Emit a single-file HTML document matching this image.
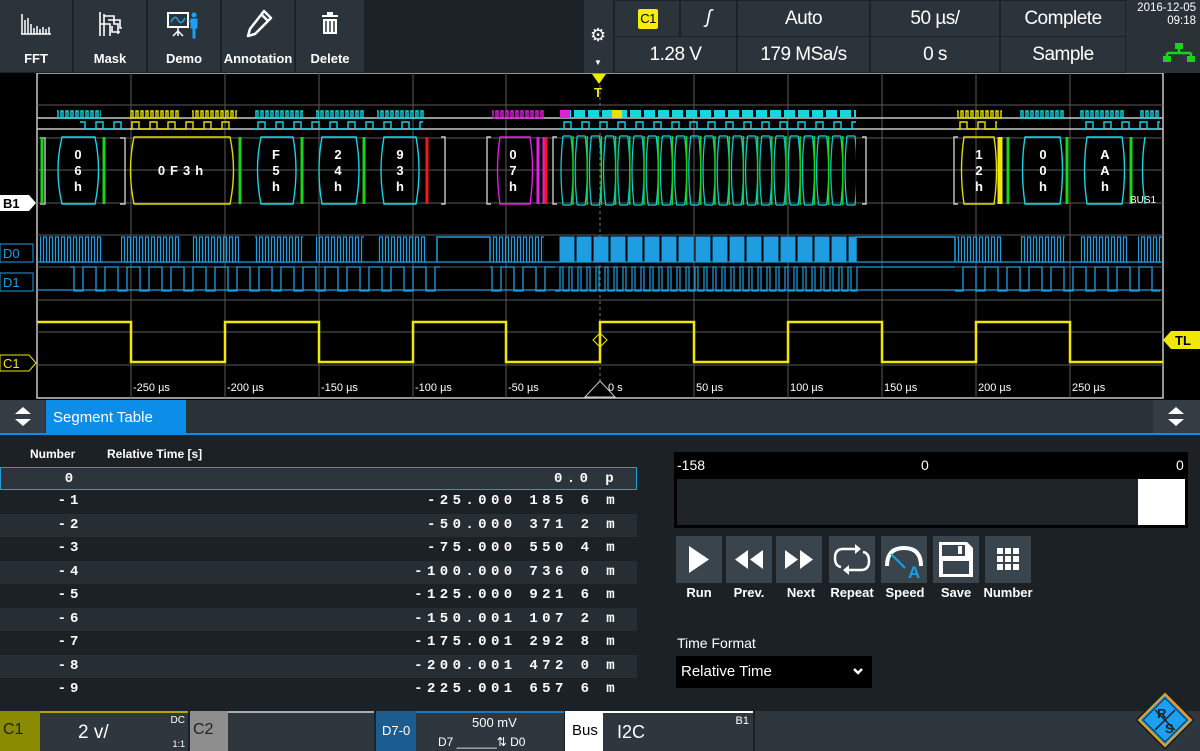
<!DOCTYPE html>
<html><head><meta charset="utf-8"><style>
*{margin:0;padding:0;box-sizing:border-box}
body{width:1200px;height:751px;background:#000;position:relative;overflow:hidden;font-family:"Liberation Sans",sans-serif;color:#fff}
.a{position:absolute}
.btn{position:absolute;top:0;height:72px;background:#2c343b;text-align:center;font-size:13px;font-weight:bold;transform-origin:0 0}
.btn span{position:absolute;left:0;right:0;top:51px}
.cell{position:absolute;background:#2c343b;text-align:center;font-size:19px;color:#fff;letter-spacing:-0.5px}
.row{position:absolute;left:0;width:637px;height:23.4px;font-family:"Liberation Mono",monospace;font-weight:bold;font-size:14px}
.row .n{position:absolute;left:50px;top:3px;width:40px;text-align:center;letter-spacing:4px}
.row .v{position:absolute;right:18px;top:3px;letter-spacing:4.4px;white-space:pre}
.pb{position:absolute;top:536px;width:46px;height:47px;background:#3a444c}
.pl{position:absolute;top:585px;width:56px;text-align:center;font-size:13px;font-weight:bold}
</style></head><body>
<!-- top toolbar -->
<div class="a" style="left:0;top:0;width:1200px;height:73px;background:#1c2226"></div>
<div class="btn" style="left:0;width:72px"><svg class="a" style="left:20px;top:12px" width="32" height="26"><path d="M2 2V22M5 8V22M8 6V22M11 12V22M14 16V22M17 14V22M20 17V22M23 15V22M26 17V22M29 15V22M1 22H31" stroke="#fff" stroke-width="1.5"/></svg><span>FFT</span></div>
<div class="btn" style="left:74px;width:72px"><svg class="a" style="left:22px;top:10px" width="28" height="28"><path d="M4 2V26M8 4V26M8 6H18V14H22V24M12 10H24V18H26M4 14H14V26M16 16V22H24" stroke="#fff" stroke-width="1.6" fill="none"/></svg><span>Mask</span></div>
<div class="btn" style="left:148px;width:72px"><svg class="a" style="left:18px;top:10px" width="36" height="30"><rect x="2" y="3" width="20" height="14" fill="none" stroke="#fff" stroke-width="2"/><path d="M5 12Q9 4 12 10T19 8" stroke="#1ea0f0" fill="none" stroke-width="1.5"/><path d="M12 17V26M7 26L12 21L17 26" stroke="#fff" stroke-width="1.5" fill="none"/><circle cx="28" cy="5" r="2.5" fill="#1ea0f0"/><path d="M25 9H31V18H29V28H27V18H25Z M22 11L26 12" fill="#1ea0f0" stroke="#1ea0f0"/></svg><span>Demo</span></div>
<div class="btn" style="left:222px;width:72px"><svg class="a" style="left:22px;top:8px" width="30" height="32"><path d="M20 3L27 10L11 26L4 28L6 21Z M17 6L24 13" stroke="#fff" stroke-width="2.5" fill="none" stroke-linejoin="round"/></svg><span>Annotation</span></div>
<div class="btn" style="left:296px;width:68px"><svg class="a" style="left:25px;top:12px" width="18" height="24"><rect x="1" y="3" width="16" height="2" fill="#fff"/><rect x="6" y="0" width="6" height="3" fill="#fff"/><path d="M2 7H16V22H2Z" fill="#fff"/><path d="M5 9V20M9 9V20M13 9V20" stroke="#2c343b" stroke-width="1.5"/></svg><span>Delete</span></div>
<div class="a" style="left:584px;top:0;width:29px;height:73px;background:#2c343b"></div>
<div class="a" style="left:590px;top:25px;font-size:18px;color:#fff">⚙</div>
<div class="a" style="left:594px;top:58px;font-size:8px;color:#fff">▼</div>
<div class="cell" style="left:615px;top:1px;width:64px;height:35px"><div class="a" style="left:23px;top:8px;width:20px;height:20px;background:#f4ee00;color:#000;font-size:13px;line-height:20px;border-radius:2px">C1</div></div>
<div class="cell" style="left:681px;top:1px;width:55px;height:35px;line-height:34px;font-style:italic">ʃ</div>
<div class="cell" style="left:738px;top:1px;width:131px;height:35px;line-height:35px">Auto</div>
<div class="cell" style="left:871px;top:1px;width:128px;height:35px;line-height:35px">50 µs/</div>
<div class="cell" style="left:1001px;top:1px;width:124px;height:35px;line-height:35px">Complete</div>
<div class="cell" style="left:615px;top:37px;width:121px;height:35px;line-height:35px">1.28 V</div>
<div class="cell" style="left:738px;top:37px;width:131px;height:35px;line-height:35px">179 MSa/s</div>
<div class="cell" style="left:871px;top:37px;width:128px;height:35px;line-height:35px">0 s</div>
<div class="cell" style="left:1001px;top:37px;width:124px;height:35px;line-height:35px">Sample</div>
<div class="a" style="left:1126px;top:0;width:74px;height:73px;background:#2a3238"></div>
<div class="a" style="left:1128px;top:2px;width:68px;text-align:right;font-size:11.5px;line-height:13px">2016-12-05<br>09:18</div>
<svg class="a" style="left:1162px;top:42px" width="34" height="22"><rect x="13" y="1" width="8" height="6" fill="#19d419"/><path d="M17 7V11M5 11H29M5 11V14M29 11V14" stroke="#19d419" stroke-width="2.5"/><rect x="1" y="14" width="8" height="6" fill="#19d419"/><rect x="25" y="14" width="8" height="6" fill="#19d419"/></svg>

<!-- scope plot -->
<svg class="a" style="left:0;top:73px" width="1200" height="327" viewBox="0 73 1200 327">
<defs>
<pattern id="pd0" patternUnits="userSpaceOnUse" x="0" y="236" width="6" height="28"><path d="M0 26H1.5V1H4.5V26H6" stroke="#1e9ee0" fill="none" stroke-width="1.2"/></pattern>
<pattern id="pd1" patternUnits="userSpaceOnUse" x="0" y="266" width="22" height="26"><path d="M0 1H8V25H17V1H22" stroke="#1e9ee0" fill="none" stroke-width="1.3"/></pattern>
<pattern id="pd1b" patternUnits="userSpaceOnUse" x="0" y="266" width="9" height="26"><path d="M0 25H2V1H5V25H9" stroke="#1e9ee0" fill="none" stroke-width="1.2"/></pattern>
<pattern id="pbc" patternUnits="userSpaceOnUse" x="0" y="110" width="5" height="9"><path d="M0 8H1V1H3V8H5" stroke="#17d6e0" fill="none" stroke-width="1.4"/></pattern>
<pattern id="pby" patternUnits="userSpaceOnUse" x="0" y="110" width="5" height="9"><path d="M0 8H1V1H3V8H5" stroke="#e8e000" fill="none" stroke-width="1.4"/></pattern>
<pattern id="pbm" patternUnits="userSpaceOnUse" x="0" y="110" width="5" height="9"><path d="M0 8H1V1H3V8H5" stroke="#e020e0" fill="none" stroke-width="1.4"/></pattern>
<pattern id="pb2" patternUnits="userSpaceOnUse" x="0" y="121" width="18" height="9"><path d="M0 8H6V1H13V8H18" stroke="#17d6e0" fill="none" stroke-width="1.4"/></pattern>
<pattern id="pb2y" patternUnits="userSpaceOnUse" x="0" y="121" width="18" height="9"><path d="M0 8H6V1H13V8H18" stroke="#e8e000" fill="none" stroke-width="1.4"/></pattern>
<pattern id="phx" patternUnits="userSpaceOnUse" x="560" y="135" width="14.2" height="72"><path d="M3 1Q-1 36 3 70M11 1Q15 36 11 70M3 1H11M3 70H11" stroke="#17d6e0" fill="none" stroke-width="1.2"/><path d="M13 1V70" stroke="#19d419" stroke-width="1.5"/></pattern>
<pattern id="pfill" patternUnits="userSpaceOnUse" x="559" y="236" width="17" height="28"><rect x="1" y="1" width="14" height="25" fill="#1e9ee0"/><path d="M0 26H1V1H15V26H17" stroke="#1e9ee0" fill="none"/></pattern>
</defs>
<rect x="37" y="73" width="1126" height="325" fill="#000" stroke="#c8c8c8" stroke-width="1.5"/>
<g stroke="#5a5a5a" stroke-width="1">
<path d="M131 73V398M225 73V398M319 73V398M413 73V398M506 73V398M694 73V398M788 73V398M882 73V398M976 73V398M1070 73V398"/>
<path d="M37 105H1163M37 138H1163M37 170H1163M37 203H1163M37 235H1163M37 267H1163M37 300H1163M37 332H1163M37 365H1163"/>
</g>
<path d="M600 73V398" stroke="#777" stroke-dasharray="3 3"/>
<!-- bus trace lines -->
<path d="M37 118H1163M37 129H1163" stroke="#c8c8c8" stroke-width="1.4"/>
<rect x="57" y="110" width="44" height="9" fill="url(#pbc)"/><rect x="130" y="110" width="50" height="9" fill="url(#pby)"/><rect x="192" y="110" width="45" height="9" fill="url(#pby)"/>
<rect x="255" y="110" width="48" height="9" fill="url(#pbc)"/><rect x="316" y="110" width="48" height="9" fill="url(#pbc)"/><rect x="377" y="110" width="48" height="9" fill="url(#pbc)"/><rect x="492" y="110" width="52" height="9" fill="url(#pbm)"/>
<rect x="957" y="110" width="45" height="9" fill="url(#pby)"/><rect x="1020" y="110" width="45" height="9" fill="url(#pbc)"/><rect x="1080" y="110" width="45" height="9" fill="url(#pbc)"/><rect x="1140" y="110" width="20" height="9" fill="url(#pbc)"/>
<path d="M560 114H856" stroke="#17d6e0" stroke-width="8" stroke-dasharray="11 3"/>
<rect x="560" y="110" width="10" height="8" fill="#e020e0"/><rect x="612" y="110" width="10" height="8" fill="#e8e000"/>
<rect x="80" y="121" width="45" height="9" fill="url(#pb2)"/><rect x="130" y="121" width="100" height="9" fill="url(#pb2y)"/><rect x="253" y="121" width="170" height="9" fill="url(#pb2)"/><rect x="560" y="121" width="296" height="9" fill="url(#pb2)"/><rect x="957" y="121" width="40" height="9" fill="url(#pb2y)"/><rect x="1080" y="121" width="80" height="9" fill="url(#pb2)"/>
<!-- hexes -->
<g fill="none" stroke-width="1.4">
<path d="M40 138H45V204H40M120 138H125V204H120" stroke="#c8c8c8"/>
<path d="M62 137H95Q102 170 95 204H62Q54 170 62 137Z" stroke="#17d6e0"/>
<path d="M134 137H230Q237 170 230 204H134Q127 170 134 137Z" stroke="#e0d800"/>
<path d="M261 137H293Q299 170 293 204H261Q254 170 261 137Z" stroke="#17d6e0"/>
<path d="M322 137H356Q362 170 356 204H322Q316 170 322 137Z" stroke="#17d6e0"/>
<path d="M384 137H416Q422 170 416 204H384Q378 170 384 137Z" stroke="#17d6e0"/>
<path d="M441 137H445V204H441M491 137H487V204H491M557 137H553V204H557" stroke="#c8c8c8"/>
<path d="M500 137H530Q535 170 530 204H500Q495 170 500 137Z" stroke="#e020e0"/>
<path d="M862 137H866V204H862M958 137H954V204H958" stroke="#c8c8c8"/>
<path d="M964 137H994Q999 170 994 204H964Q959 170 964 137Z" stroke="#e0d800"/>
<path d="M1025 137H1060Q1065 170 1060 204H1025Q1020 170 1025 137Z" stroke="#17d6e0"/>
<path d="M1087 137H1122Q1127 170 1122 204H1087Q1082 170 1087 137Z" stroke="#17d6e0"/>
<path d="M1145 137Q1140 170 1145 204" stroke="#17d6e0"/>
</g>
<rect x="560" y="135" width="296" height="72" fill="url(#phx)"/>
<g stroke-width="3">
<path d="M42 137V204M104 137V204M240 137V204M302 137V204M364 137V204M1008 137V204M1067 137V204M1131 137V204" stroke="#19d419"/>
<path d="M427 137V204" stroke="#f01818"/><path d="M538 137V204M544 137V204" stroke="#e020e0"/><path d="M546 137V204" stroke="#f01818"/>
<path d="M1000 137V204" stroke="#f0e800" stroke-width="5"/>
</g>
<g fill="#fff" font-family="Liberation Sans" font-weight="bold" font-size="13" text-anchor="middle">
<text x="78" y="159">0</text><text x="78" y="175">6</text><text x="78" y="191">h</text>
<text x="183" y="175" letter-spacing="5">0F3h</text>
<text x="276" y="159">F</text><text x="276" y="175">5</text><text x="276" y="191">h</text>
<text x="338" y="159">2</text><text x="338" y="175">4</text><text x="338" y="191">h</text>
<text x="400" y="159">9</text><text x="400" y="175">3</text><text x="400" y="191">h</text>
<text x="513" y="159">0</text><text x="513" y="175">7</text><text x="513" y="191">h</text>
<text x="979" y="159">1</text><text x="979" y="175">2</text><text x="979" y="191">h</text>
<text x="1043" y="159">0</text><text x="1043" y="175">0</text><text x="1043" y="191">h</text>
<text x="1105" y="159">A</text><text x="1105" y="175">A</text><text x="1105" y="191">h</text>
</g>
<text x="1130" y="203" fill="#fff" font-size="10" font-family="Liberation Sans">BUS1</text>
<!-- D0 -->
<path d="M37 262H1163" stroke="#1e9ee0" stroke-width="1.3"/>
<rect x="40" y="236" width="63" height="28" fill="url(#pd0)"/><rect x="121" y="236" width="60" height="28" fill="url(#pd0)"/><rect x="192" y="236" width="47" height="28" fill="url(#pd0)"/><rect x="255" y="236" width="48" height="28" fill="url(#pd0)"/><rect x="316" y="236" width="48" height="28" fill="url(#pd0)"/><rect x="377" y="236" width="50" height="28" fill="url(#pd0)"/><rect x="492" y="236" width="52" height="28" fill="url(#pd0)"/><rect x="957" y="236" width="45" height="28" fill="url(#pd0)"/><rect x="1020" y="236" width="45" height="28" fill="url(#pd0)"/><rect x="1080" y="236" width="48" height="28" fill="url(#pd0)"/><rect x="1138" y="236" width="24" height="28" fill="url(#pd0)"/>
<path d="M437 262V237H490V262M856 262V237H955V262" stroke="#1e9ee0" fill="none" stroke-width="1.5"/>
<rect x="559" y="236" width="297" height="28" fill="url(#pfill)"/>
<!-- D1 -->
<path d="M37 290H1163" stroke="#1e9ee0" stroke-width="1.3"/>
<rect x="70" y="266" width="370" height="26" fill="url(#pd1)"/><rect x="490" y="266" width="65" height="26" fill="url(#pd1)"/><rect x="555" y="266" width="303" height="26" fill="url(#pd1b)"/><path d="M858 267H955" stroke="#1e9ee0" stroke-width="1.3"/><rect x="955" y="266" width="205" height="26" fill="url(#pd1)"/>
<!-- C1 -->
<path d="M37 322H131V362H225V322H319V362H413V322H506V362H600V322H694V362H788V322H882V362H976V322H1070V362H1163" stroke="#f0e800" stroke-width="2.5" fill="none"/>
<path d="M600 333L607 340L600 347L593 340Z" stroke="#f0e800" fill="none"/>
<!-- labels -->
<g fill="#fff" font-size="11" font-family="Liberation Sans">
<text x="133" y="391">-250 µs</text><text x="227" y="391">-200 µs</text><text x="321" y="391">-150 µs</text><text x="415" y="391">-100 µs</text><text x="508" y="391">-50 µs</text><text x="608" y="391">0 s</text><text x="696" y="391">50 µs</text><text x="790" y="391">100 µs</text><text x="884" y="391">150 µs</text><text x="978" y="391">200 µs</text><text x="1072" y="391">250 µs</text>
</g>
<path d="M585 397L600 381L615 397Z" fill="#000" stroke="#ccc"/>
<path d="M592 74H606L599 84Z" fill="#f0e800"/><text x="594" y="97" fill="#f0e800" font-size="13" font-weight="bold" font-family="Liberation Sans">T</text>
<path d="M0 195H29L36 203L29 211H0Z" fill="#fff"/><text x="3" y="208" font-size="13" font-weight="bold" fill="#000" font-family="Liberation Sans">B1</text>
<rect x="0" y="244" width="33" height="18" fill="#000" stroke="#1e9ee0"/><text x="3" y="258" font-size="13" fill="#1e9ee0" font-family="Liberation Sans">D0</text>
<rect x="0" y="273" width="33" height="18" fill="#000" stroke="#1e9ee0"/><text x="3" y="287" font-size="13" fill="#1e9ee0" font-family="Liberation Sans">D1</text>
<path d="M0 355H29L36 363L29 371H0Z" fill="#000" stroke="#f0e800"/><text x="3" y="368" font-size="13" fill="#f0e800" font-family="Liberation Sans">C1</text>
<path d="M1200 331H1171L1163 340L1171 349H1200Z" fill="#f0e800"/><text x="1175" y="345" font-size="13" font-weight="bold" fill="#000" font-family="Liberation Sans">TL</text>
</svg>

<!-- lower panel -->
<div class="a" style="left:0;top:400px;width:1200px;height:33px;background:#2a3238"></div>
<div class="a" style="left:0;top:400px;width:45px;height:33px;background:#343d44"></div>
<svg class="a" style="left:13px;top:405px" width="20" height="24"><path d="M2 9L10 2L18 9Z M2 14L10 21L18 14Z" fill="#fff"/></svg>
<div class="a" style="left:1153px;top:400px;width:47px;height:33px;background:#343d44"></div>
<svg class="a" style="left:1166px;top:405px" width="20" height="24"><path d="M2 9L10 2L18 9Z M2 14L10 21L18 14Z" fill="#fff"/></svg>
<div class="a" style="left:46px;top:400px;width:140px;height:34px;background:#0b8de8;font-size:15px;padding:9px 0 0 7px">Segment Table</div>
<div class="a" style="left:0;top:433px;width:1200px;height:2px;background:#0b8de8"></div>
<div class="a" style="left:0;top:435px;width:1200px;height:276px;background:#1b2125"></div>
<div class="a" style="left:30px;top:447px;font-size:12px;font-weight:bold">Number</div>
<div class="a" style="left:107px;top:447px;font-size:12px;font-weight:bold">Relative Time [s]</div>
<div class="row" style="top:467px;background:#2c353c;border:1px solid #1e9ee0"><span class="n">0</span><span class="v">0.0 p</span></div>
<div class="row" style="top:490px"><span class="n">-1</span><span class="v">-25.000 185 6 m</span></div>
<div class="row" style="top:513.5px;background:#262e34"><span class="n">-2</span><span class="v">-50.000 371 2 m</span></div>
<div class="row" style="top:537px"><span class="n">-3</span><span class="v">-75.000 550 4 m</span></div>
<div class="row" style="top:560.5px;background:#262e34"><span class="n">-4</span><span class="v">-100.000 736 0 m</span></div>
<div class="row" style="top:584px"><span class="n">-5</span><span class="v">-125.000 921 6 m</span></div>
<div class="row" style="top:607.5px;background:#262e34"><span class="n">-6</span><span class="v">-150.001 107 2 m</span></div>
<div class="row" style="top:631px"><span class="n">-7</span><span class="v">-175.001 292 8 m</span></div>
<div class="row" style="top:654.5px;background:#262e34"><span class="n">-8</span><span class="v">-200.001 472 0 m</span></div>
<div class="row" style="top:678px"><span class="n">-9</span><span class="v">-225.001 657 6 m</span></div>

<div class="a" style="left:674px;top:452px;width:514px;height:76px;background:#000"></div>
<div class="a" style="left:677px;top:479px;width:505px;height:46px;background:#1d2327"></div>
<div class="a" style="left:1138px;top:479px;width:47px;height:46px;background:#fff"></div>
<div class="a" style="left:677px;top:457px;font-size:14px">-158</div>
<div class="a" style="left:921px;top:457px;font-size:14px">0</div>
<div class="a" style="left:1176px;top:457px;font-size:14px">0</div>
<div class="pb" style="left:676px"><svg width="46" height="47"><path d="M13 10L33 23.5L13 37Z" fill="#fff"/></svg></div>
<div class="pb" style="left:726px"><svg width="46" height="47"><path d="M22 14L9 23.5L22 33ZM37 14L24 23.5L37 33Z" fill="#fff"/></svg></div>
<div class="pb" style="left:776px"><svg width="46" height="47"><path d="M9 14L22 23.5L9 33ZM24 14L37 23.5L24 33Z" fill="#fff"/></svg></div>
<div class="pb" style="left:829px"><svg width="46" height="47"><path d="M28 13H14Q6 13 6 22Q6 30 12 31M18 34H32Q40 34 40 25Q40 17 34 16" stroke="#fff" stroke-width="2.5" fill="none"/><path d="M26 8L32 13L26 18ZM20 29L14 34L20 39Z" fill="#fff"/></svg></div>
<div class="pb" style="left:881px"><svg width="46" height="47"><path d="M6 30Q6 12 23 12Q40 12 40 30" stroke="#fff" stroke-width="4" fill="none"/><path d="M10 18L24 32" stroke="#1e9ee0" stroke-width="2"/><text x="27" y="42" fill="#1e9ee0" font-size="17" font-weight="bold" font-family="Liberation Sans">A</text></svg></div>
<div class="pb" style="left:933px"><svg width="46" height="47"><path d="M6 6H34L40 12V41H6Z" fill="#fff"/><rect x="9" y="9" width="23" height="11" fill="#3a444c"/><rect x="25" y="10" width="4" height="8" fill="#fff"/><rect x="10" y="25" width="26" height="13" fill="#3a444c"/></svg></div>
<div class="pb" style="left:985px"><svg width="46" height="47"><g fill="#fff"><rect x="12" y="12" width="6" height="6"/><rect x="20" y="12" width="6" height="6"/><rect x="28" y="12" width="6" height="6"/><rect x="12" y="20" width="6" height="6"/><rect x="20" y="20" width="6" height="6"/><rect x="28" y="20" width="6" height="6"/><rect x="12" y="28" width="6" height="6"/><rect x="20" y="28" width="6" height="6"/><rect x="28" y="28" width="6" height="6"/></g></svg></div>
<div class="pl" style="left:671px">Run</div><div class="pl" style="left:721px">Prev.</div><div class="pl" style="left:773px">Next</div><div class="pl" style="left:824px">Repeat</div><div class="pl" style="left:877px">Speed</div><div class="pl" style="left:928px">Save</div><div class="pl" style="left:980px">Number</div>
<div class="a" style="left:677px;top:635px;font-size:14px">Time Format</div>
<div class="a" style="left:676px;top:656px;width:196px;height:32px;background:#000;font-size:15px;padding:7px 0 0 5px">Relative Time<svg class="a" style="left:176px;top:11px" width="12" height="10"><path d="M2 2L6 6L10 2" stroke="#fff" stroke-width="2.5" fill="none"/></svg></div>

<!-- status bar -->
<div class="a" style="left:0;top:711px;width:1200px;height:40px;background:#1b2125"></div>
<div class="a" style="left:0;top:711px;width:40px;height:40px;background:#8a8a00;font-size:16px;padding:10px 0 0 3px;color:#222">C1</div>
<div class="a" style="left:40px;top:711px;width:148px;height:40px;background:#2e373e;border-top:2px solid #b0a800"><span class="a" style="left:38px;top:9px;font-size:19px">2 v/</span><span class="a" style="right:3px;top:2px;font-size:10px">DC</span><span class="a" style="right:3px;top:26px;font-size:9px">1:1</span></div>
<div class="a" style="left:190px;top:711px;width:38px;height:40px;background:#8e8e8e;font-size:16px;padding:10px 0 0 3px;color:#222">C2</div>
<div class="a" style="left:228px;top:711px;width:146px;height:40px;background:#2e373e;border-top:2px solid #aaa"></div>
<div class="a" style="left:376px;top:711px;width:40px;height:40px;background:#1b5d90;font-size:13px;padding:12px 0 0 6px">D7-0</div>
<div class="a" style="left:416px;top:711px;width:148px;height:40px;background:#2e373e;border-top:2px solid #1b78c0"><span class="a" style="left:56px;top:2px;font-size:13px">500 mV</span><span class="a" style="left:22px;top:22px;font-size:12px">D7 ______⇅ D0</span></div>
<div class="a" style="left:565px;top:711px;width:38px;height:40px;background:#fff;color:#000;font-size:15px;padding:11px 0 0 7px">Bus</div>
<div class="a" style="left:603px;top:711px;width:150px;height:40px;background:#2e373e;border-top:2px solid #fff"><span class="a" style="left:14px;top:9px;font-size:18px">I2C</span><span class="a" style="right:4px;top:2px;font-size:11px">B1</span></div>
<div class="a" style="left:755px;top:711px;width:375px;height:40px;background:#2e373e"></div>
<div class="a" style="left:1130px;top:711px;width:70px;height:40px;background:#2e373e"></div>
<svg class="a" style="left:1133px;top:688px" width="64" height="63"><path d="M32 2L62 32L32 62L2 32Z" fill="#1b2125"/><path d="M32 6L58 32L32 58L6 32Z" fill="#1ea0f0" stroke="#f0a020" stroke-width="2"/><path d="M32 10L54 32L32 54L10 32Z" fill="none" stroke="#1b2125" stroke-width="1"/><path d="M22 22L42 42M42 22L22 42" stroke="#1b2125" stroke-width="1.5"/><text x="24" y="30" font-size="13" font-weight="bold" fill="#1b2125" font-family="Liberation Sans">R</text><text x="32" y="45" font-size="13" font-weight="bold" fill="#1b2125" font-family="Liberation Sans">S</text></svg>
</body></html>
